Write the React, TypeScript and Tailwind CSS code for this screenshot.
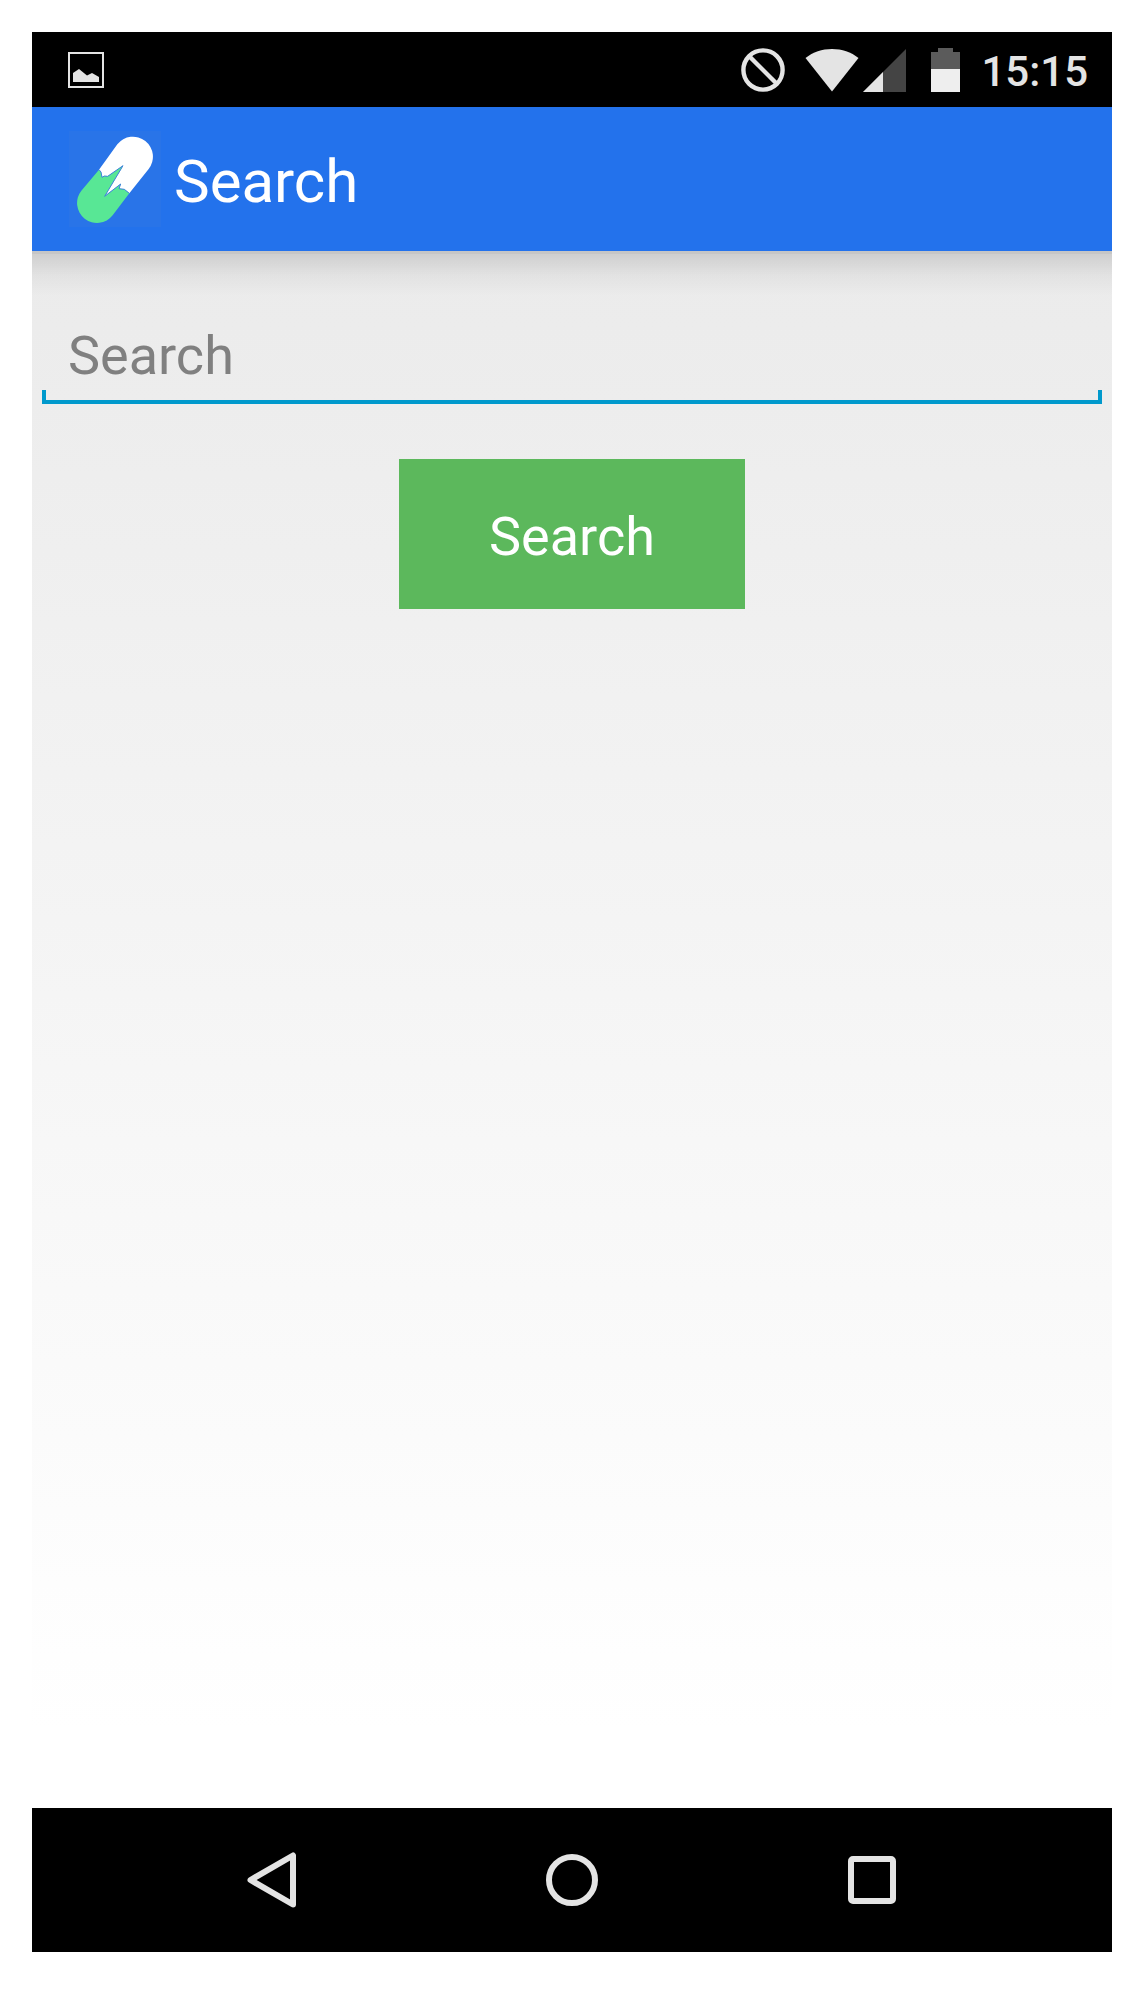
import React from "react";

function PictureIcon() {
  return (
    <svg width="36" height="36" viewBox="0 0 36 36" aria-hidden="true">
      <rect x="1" y="1" width="34" height="34" fill="none" stroke="#e4e4e4" strokeWidth="2" />
      <path d="M5 30V21L11 17L19 23.5L24 21L31 25V30Z" fill="#e4e4e4" />
    </svg>
  );
}

function BlockedIcon() {
  return (
    <svg width="44" height="44" viewBox="0 0 44 44" aria-hidden="true">
      <circle cx="22" cy="22" r="19.6" fill="none" stroke="#e4e4e4" strokeWidth="4.4" />
      <path d="M8.5 8.5L35.5 35.5" stroke="#e4e4e4" strokeWidth="4.4" />
    </svg>
  );
}

function WifiIcon() {
  return (
    <svg width="54" height="44" viewBox="0 0 54 44" aria-hidden="true">
      <path d="M0.5 10C8 4 17 1 27 1S46 4 53.5 10L27 43.5Z" fill="#e4e4e4" />
    </svg>
  );
}

function SignalIcon() {
  return (
    <svg width="44" height="44" viewBox="0 0 44 44" aria-hidden="true">
      <path d="M43 1V44H0Z" fill="#444444" />
      <path d="M20 24V44H0Z" fill="#e4e4e4" />
    </svg>
  );
}

function BatteryIcon() {
  return (
    <svg width="29" height="44" viewBox="0 0 29 44" aria-hidden="true">
      <path d="M7 0H22V4H29V21H0V4H7Z" fill="#5b5b5b" />
      <path d="M0 21H29V44H0Z" fill="#eeeeee" />
    </svg>
  );
}

function PillLogo() {
  return (
    <svg width="92" height="96" viewBox="27 33 276 288" className="bg-[#2974e8]" aria-hidden="true">
      <path
        d="M117 149L64 212A59 59 0 0 0 158 286L208 220L193 208L177 206L182 192L134 229L189 137L143 169L133 168L126 172L123 156Z"
        fill="#58e795"
      />
      <path
        d="M117 149L172 73A59 59 0 0 1 266 147L208 220L193 208L177 206L182 192L134 229L189 137L143 169L133 168L126 172L123 156Z"
        fill="#ffffff"
      />
      <path
        d="M117 149L123 156L126 172L133 168L143 169L189 137L134 229L182 192L177 206L193 208L208 220"
        fill="none"
        stroke="#3d86d6"
        strokeWidth="3"
      />
    </svg>
  );
}

function StatusBar() {
  return (
    <header className="flex h-[75px] items-center bg-black pr-[24px] pl-[36px] text-[#e4e4e4]">
      <PictureIcon />
      <div className="ml-auto flex items-center">
        <BlockedIcon />
        <div className="ml-[20px] flex items-center gap-[4px]">
          <WifiIcon />
          <SignalIcon />
        </div>
        <div className="ml-[24px]">
          <BatteryIcon />
        </div>
        <time className="ml-[21px] pt-[4px] text-[42px] leading-[48px] font-medium">15:15</time>
      </div>
    </header>
  );
}

function NavBar() {
  return (
    <nav className="grid h-[144px] grid-cols-3 bg-black px-[90px]">
      <button type="button" aria-label="Back" className="flex items-center justify-center">
        <svg width="50" height="56" viewBox="0 0 50 56" fill="none" stroke="#e4e4e4" strokeWidth="6" strokeLinejoin="round">
          <path d="M46 3.5V52.5L3.5 28Z" />
        </svg>
      </button>
      <button type="button" aria-label="Home" className="flex items-center justify-center">
        <svg width="52" height="52" viewBox="0 0 52 52" fill="none" stroke="#e4e4e4" strokeWidth="6">
          <circle cx="26" cy="26" r="23" />
        </svg>
      </button>
      <button type="button" aria-label="Recent apps" className="flex items-center justify-center">
        <svg width="48" height="48" viewBox="0 0 48 48" fill="none" stroke="#e4e4e4" strokeWidth="6">
          <rect x="3" y="3" width="42" height="42" rx="2" />
        </svg>
      </button>
    </nav>
  );
}

export default function App() {
  return (
    <div className="flex min-h-screen flex-col bg-white px-8 pt-8 pb-13 font-['Roboto',sans-serif]">
      <div className="flex flex-1 flex-col">
        <StatusBar />
        <div className="flex h-[144px] items-center gap-[13px] bg-[#2372ec] pl-[37px] text-white">
          <PillLogo />
          <h1 className="pt-[6px] text-[60px] leading-[72px]">Search</h1>
        </div>
        <main className="flex-1 bg-linear-to-b from-[#ebebeb] to-white to-95%">
          <div className="h-[3px] bg-[#c6c6c6]" />
          <div className="h-[42px] bg-linear-to-b from-black/12 via-black/4 to-transparent" />
          <form className="flex flex-col items-center px-[10px]" onSubmit={(e) => e.preventDefault()}>
            <div className="relative w-full">
              <input
                type="text"
                aria-label="Search"
                placeholder="Search"
                className="block h-[108px] w-full border-b-4 border-[#0099cc] px-[26px] pt-[14px] text-[54px] text-[#333333] outline-none placeholder:text-[#808080]"
              />
              <span className="absolute bottom-0 left-0 h-[14px] w-[4px] bg-[#0099cc]" />
              <span className="absolute right-0 bottom-0 h-[14px] w-[4px] bg-[#0099cc]" />
            </div>
            <button type="submit" className="mt-[55px] h-[150px] w-[346px] bg-[#5cb85c] pt-[4px] text-[54px] text-white">
              Search
            </button>
          </form>
        </main>
        <NavBar />
      </div>
    </div>
  );
}
